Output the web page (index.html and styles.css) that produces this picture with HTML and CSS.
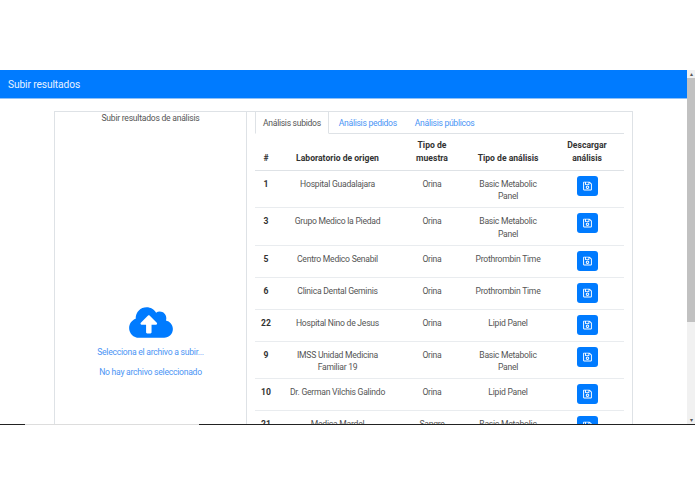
FILE: index.html
```html
<!DOCTYPE html>
<html lang="es">
<head>
    <meta charset="UTF-8">
    <meta name="viewport" content="width=device-width, initial-scale=1.0">
    <title>Subir resultados</title>
    <link rel="stylesheet" href="styles.css">
</head>
<body>
    <svg class="icon-defs" aria-hidden="true">
        <symbol id="save" viewBox="0 0 448 512">
            <path d="M433.941 129.941l-83.882-83.882A48 48 0 0 0 316.118 32H48C21.49 32 0 53.49 0 80v352c0 26.51 21.49 48 48 48h352c26.51 0 48-21.49 48-48V163.882a48 48 0 0 0-14.059-33.941zM272 80v80H144V80h128zm122 352H54a6 6 0 0 1-6-6V86a6 6 0 0 1 6-6h42v104c0 13.255 10.745 24 24 24h176c13.255 0 24-10.745 24-24V83.882l78.243 78.243a6 6 0 0 1 1.757 4.243V426a6 6 0 0 1-6 6zM224 232c-48.523 0-88 39.477-88 88s39.477 88 88 88 88-39.477 88-88-39.477-88-88-88zm0 128c-22.056 0-40-17.944-40-40s17.944-40 40-40 40 17.944 40 40-17.944 40-40 40z"/>
        </symbol>
    </svg>

    <div class="window">
        <div class="viewport">
            <div class="page">
                <nav class="navbar">Subir resultados</nav>

                <div class="card">
                    <!-- Upload column -->
                    <section class="upload">
                        <div class="upload-title">Subir resultados de análisis</div>
                        <svg class="cloud" viewBox="0 0 640 512">
                            <path d="M537.6 226.6c4.1-10.7 6.4-22.4 6.4-34.6 0-53-43-96-96-96-19.7 0-38.1 6-53.3 16.2C367 64.2 315.3 32 256 32c-88.4 0-160 71.6-160 160 0 2.7.1 5.4.2 8.1C40.2 219.8 0 273.2 0 336c0 79.5 64.5 144 144 144h368c70.7 0 128-57.3 128-128 0-61.9-44-113.6-102.4-125.4zM393.4 288H328v112c0 8.8-7.2 16-16 16h-48c-8.8 0-16-7.2-16-16V288h-65.4c-14.3 0-21.4-17.2-11.3-27.3l105.4-105.4c6.2-6.2 16.4-6.2 22.6 0l105.4 105.4c10.1 10.1 2.9 27.3-11.3 27.3z"/>
                        </svg>
                        <a class="upload-link" href="#">Selecciona el archivo a subir...</a>
                        <a class="upload-link" href="#">No hay archivo seleccionado</a>
                    </section>

                    <!-- Results column -->
                    <section class="results">
                        <ul class="tabs">
                            <li class="tab active">Análisis subidos</li>
                            <li class="tab">Análisis pedidos</li>
                            <li class="tab">Análisis públicos</li>
                        </ul>
                        <table class="results-table">
                            <colgroup>
                                <col class="col-id">
                                <col class="col-lab">
                                <col class="col-sample">
                                <col class="col-type">
                                <col class="col-download">
                            </colgroup>
                            <thead>
                                <tr>
                                    <th class="cell-id">#</th>
                                    <th>Laboratorio de origen</th>
                                    <th>Tipo de muestra</th>
                                    <th>Tipo de análisis</th>
                                    <th class="head-download">Descargar análisis</th>
                                </tr>
                            </thead>
                            <tbody>
                                <tr>
                                    <td class="cell-id">1</td>
                                    <td class="cell-lab">Hospital Guadalajara</td>
                                    <td>Orina</td>
                                    <td>Basic Metabolic Panel</td>
                                    <td class="cell-download"><button class="btn-save"><svg><use href="#save"/></svg></button></td>
                                </tr>
                                <tr>
                                    <td class="cell-id">3</td>
                                    <td class="cell-lab">Grupo Medico la Piedad</td>
                                    <td>Orina</td>
                                    <td>Basic Metabolic Panel</td>
                                    <td class="cell-download"><button class="btn-save"><svg><use href="#save"/></svg></button></td>
                                </tr>
                                <tr>
                                    <td class="cell-id">5</td>
                                    <td class="cell-lab">Centro Medico Senabil</td>
                                    <td>Orina</td>
                                    <td>Prothrombin Time</td>
                                    <td class="cell-download"><button class="btn-save"><svg><use href="#save"/></svg></button></td>
                                </tr>
                                <tr>
                                    <td class="cell-id">6</td>
                                    <td class="cell-lab">Clinica Dental Geminis</td>
                                    <td>Orina</td>
                                    <td>Prothrombin Time</td>
                                    <td class="cell-download"><button class="btn-save"><svg><use href="#save"/></svg></button></td>
                                </tr>
                                <tr>
                                    <td class="cell-id">22</td>
                                    <td class="cell-lab">Hospital Nino de Jesus</td>
                                    <td>Orina</td>
                                    <td>Lipid Panel</td>
                                    <td class="cell-download"><button class="btn-save"><svg><use href="#save"/></svg></button></td>
                                </tr>
                                <tr>
                                    <td class="cell-id">9</td>
                                    <td class="cell-lab">IMSS Unidad Medicina Familiar 19</td>
                                    <td>Orina</td>
                                    <td>Basic Metabolic Panel</td>
                                    <td class="cell-download"><button class="btn-save"><svg><use href="#save"/></svg></button></td>
                                </tr>
                                <tr>
                                    <td class="cell-id">10</td>
                                    <td class="cell-lab">Dr. German Vilchis Galindo</td>
                                    <td>Orina</td>
                                    <td>Lipid Panel</td>
                                    <td class="cell-download"><button class="btn-save"><svg><use href="#save"/></svg></button></td>
                                </tr>
                                <tr>
                                    <td class="cell-id">21</td>
                                    <td class="cell-lab">Medica Mardel</td>
                                    <td>Sangre</td>
                                    <td>Basic Metabolic Panel</td>
                                    <td class="cell-download"><button class="btn-save"><svg><use href="#save"/></svg></button></td>
                                </tr>
                            </tbody>
                        </table>
                    </section>
                </div>
            </div>

            <div class="scrollbar">
                <div class="scroll-arrow">&#9652;</div>
                <div class="scroll-thumb"></div>
                <div class="scroll-rest"></div>
                <div class="scroll-arrow">&#9662;</div>
            </div>
        </div>
        <div class="window-edge"></div>
    </div>
</body>
</html>
```

FILE: styles.css
```css
body {
    margin: 0;
    background: #fff;
    font-family: Roboto, "Noto Sans", sans-serif;
    font-size: 8.6px;
    line-height: 12.75px;
    letter-spacing: -0.25px;
    color: #555;
}

.icon-defs {
    display: none;
}

.window {
    padding-top: 70px;
}

.viewport {
    display: flex;
    height: 354px;
    overflow: hidden;
}

.window-edge {
    height: 1px;
    background: linear-gradient(to right, #222 25px, #ddd 25px, #ddd 199px, #222 199px);
}

.page {
    flex: 1;
    min-width: 0;
}

.navbar {
    height: 28px;
    padding-left: 8px;
    background: #007bff;
    border-bottom: 1px solid #8fc1f7;
    color: #e8f2ff;
    font-size: 10.2px;
    line-height: 29px;
    letter-spacing: -0.1px;
}

.card {
    display: flex;
    width: 579px;
    margin: 12px 0 0 54px;
    border: 1px solid #dee2e6;
    border-bottom: 0;
    box-sizing: border-box;
}

/* Upload column */
.upload {
    display: flex;
    flex-direction: column;
    align-items: center;
    width: 191px;
    border-right: 1px solid #dee2e6;
    flex-shrink: 0;
}

.upload-title {
    line-height: 13px;
}

.cloud {
    width: 44px;
    height: 35px;
    margin-top: 180px;
    fill: #007bff;
}

.upload-link {
    color: #4a94f5;
    text-decoration: none;
}

.cloud + .upload-link {
    margin-top: 6px;
}

.upload-link + .upload-link {
    margin-top: 7px;
}

/* Results column */
.results {
    flex: 1;
    padding: 0 8px;
    min-width: 0;
}

.tabs {
    display: flex;
    margin: 0;
    padding: 0;
    list-style: none;
    border-bottom: 1px solid #dee2e6;
    letter-spacing: -0.3px;
}

.tab {
    height: 21px;
    padding: 0 9px;
    color: #4a94f5;
    line-height: 22px;
    box-sizing: border-box;
}

.tab.active {
    height: 22px;
    margin-right: 1px;
    margin-bottom: -1px;
    padding: 0 7px;
    border: 1px solid #dee2e6;
    border-top: 0;
    border-bottom-color: #fff;
    color: #555;
}

.results-table {
    width: 369px;
    table-layout: fixed;
    border-collapse: collapse;
}

.col-id { width: 22px; }
.col-lab { width: 121px; }
.col-sample { width: 68px; }
.col-type { width: 84px; }
.col-download { width: 74px; }

.results-table th,
.results-table td {
    padding: 7px 4px 4px;
    text-align: center;
    vertical-align: top;
}

.results-table th {
    padding: 5px 4px;
    border-bottom: 1px solid #dee2e6;
    color: #333;
    vertical-align: bottom;
    font-weight: 700;
    letter-spacing: 0;
}

.results-table td {
    border-top: 1px solid #e9ecef;
}

.results-table tbody tr:first-child td {
    border-top: 0;
}

.results-table .cell-id {
    padding-left: 0;
    padding-right: 0;
    font-weight: 700;
    color: #333;
    letter-spacing: 0;
}

.results-table .cell-lab {
    padding-left: 10px;
    padding-right: 10px;
}

.results-table .head-download {
    padding-left: 14px;
    padding-right: 14px;
}

.results-table .cell-download {
    padding: 5px 0 6px;
}

.btn-save {
    display: inline-flex;
    align-items: center;
    justify-content: center;
    width: 21px;
    height: 20px;
    padding: 0;
    background: #007bff;
    border: 0;
    border-radius: 3px;
}

.btn-save svg {
    width: 9px;
    height: 10px;
    fill: #fff;
}

/* Fake browser scrollbar */
.scrollbar {
    display: flex;
    flex-direction: column;
    width: 8px;
    background: #f1f1f1;
    flex-shrink: 0;
}

.scroll-arrow {
    height: 8px;
    color: #555;
    font-size: 6px;
    line-height: 8px;
    text-align: center;
}

.scroll-thumb {
    height: 244px;
    background: #c1c1c1;
}

.scroll-rest {
    flex: 1;
}
```
